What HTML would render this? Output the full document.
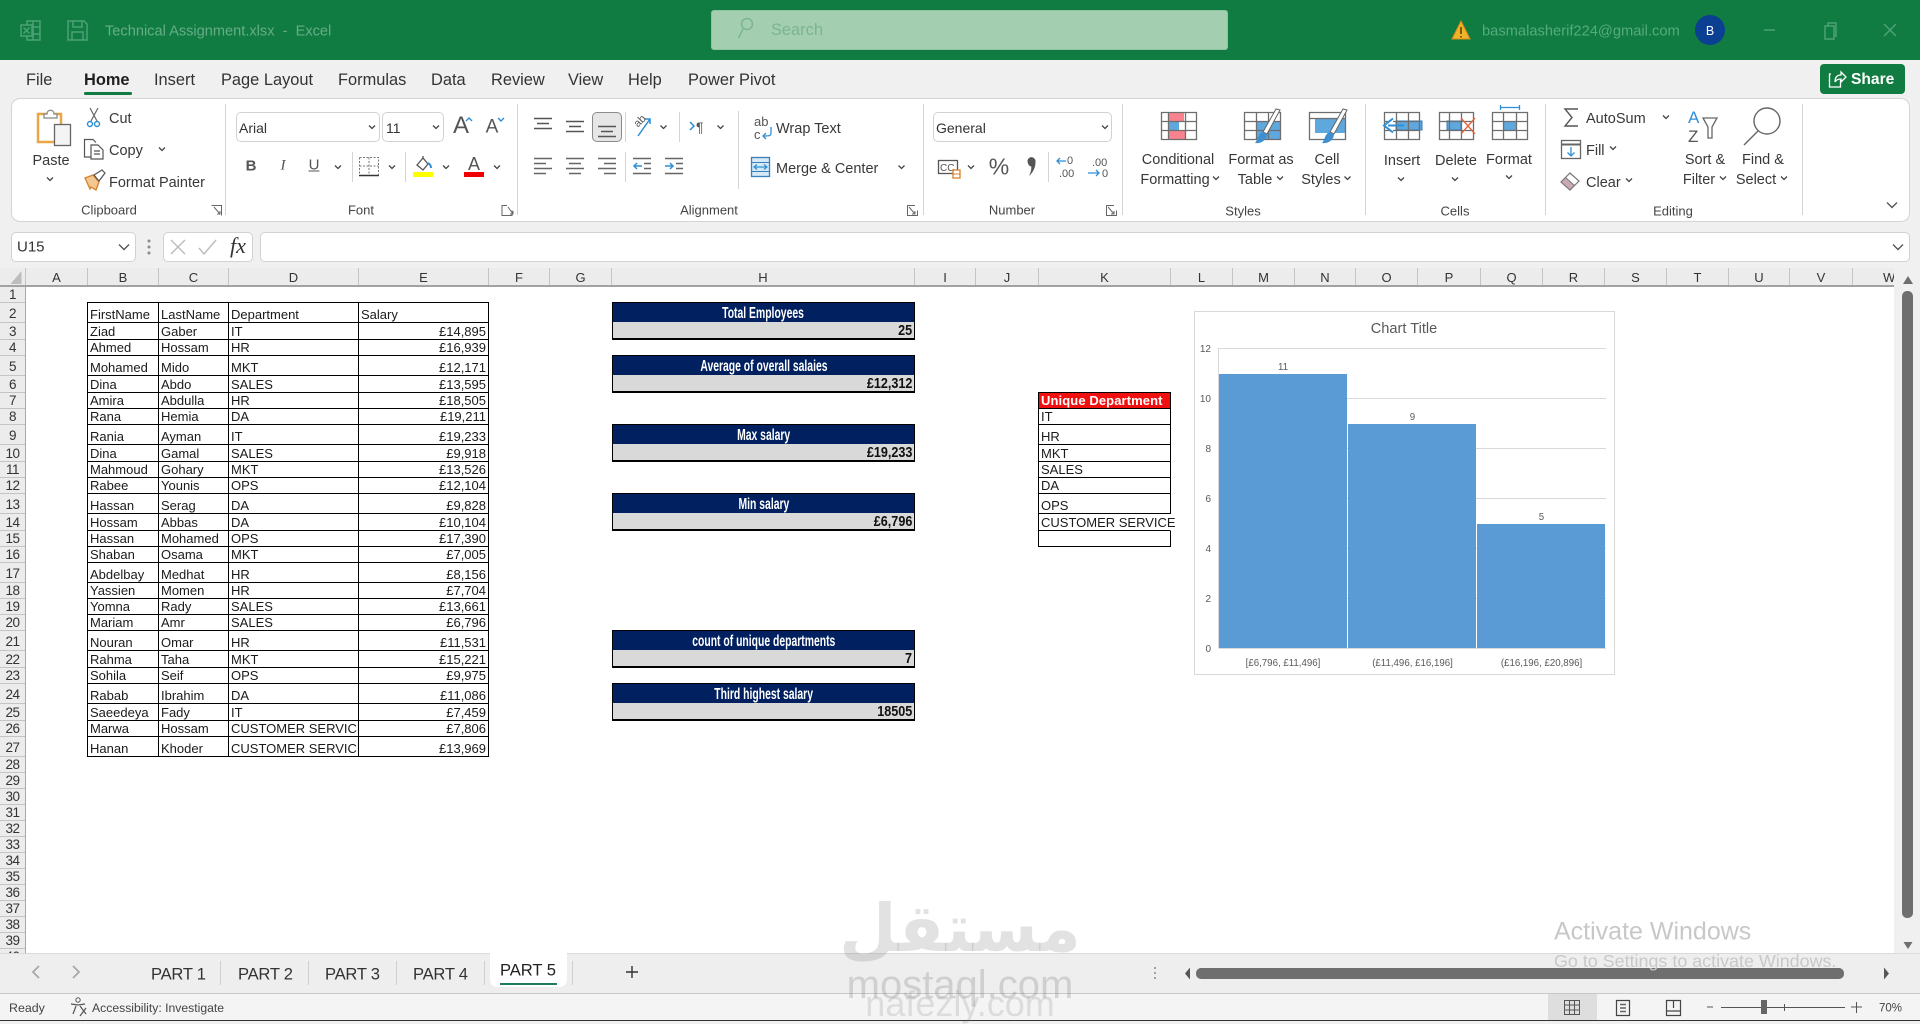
<!DOCTYPE html>
<html lang="en"><head><meta charset="utf-8"><title>Technical Assignment.xlsx - Excel</title>
<style>
html,body{margin:0;padding:0;width:1920px;height:1021px;overflow:hidden;background:#f0f0f0;font-family:"Liberation Sans",sans-serif;color:#333}
div,span,table{box-sizing:border-box}
.a{position:absolute}
.t{position:absolute;white-space:nowrap;line-height:1;transform:translateY(calc(-50% + 1px))}
.c{position:absolute;white-space:nowrap;line-height:1;transform:translate(-50%,calc(-50% + 1px));text-align:center}
.r{font-size:14.5px;color:#383838}
.g{font-size:13px;color:#444}
.tab{font-size:16.4px;color:#333;top:79px}
.box{position:absolute;background:#fff;border:1px solid #d2d2d2;border-radius:5px}
.ch{position:absolute;top:268px;height:18px;border-right:1px solid #c4c4c4;font-size:13px;line-height:20px;text-align:center;color:#333;background:#ececec}
.rh div{height:16px;line-height:16px;border-bottom:1px solid #c4c4c4;text-align:center;font-size:13.5px;letter-spacing:-.5px;color:#333;overflow:hidden}
.rh div.x{height:20px;line-height:22px}
.rh div.y{height:17px;line-height:17px}
table{border-collapse:separate;border-spacing:0;table-layout:fixed;position:absolute;border-top:1px solid #000;border-left:1px solid #000;font-size:13px;color:#1a1a1a}
td{border-right:1px solid #000;border-bottom:1px solid #000;padding:0 2px;white-space:nowrap;overflow:hidden;vertical-align:bottom;line-height:15px;box-sizing:border-box}
.h20 td{height:20px}.h17 td{height:17px}.h16 td{height:16px}
.n{text-align:right}
.kh{position:absolute;left:612px;width:303px;height:21px;background:#002060;border:1px solid #000;color:#fff;text-align:center;font-weight:700;font-size:15.5px;line-height:21px;overflow:hidden}
.kh span{display:inline-block;transform:scaleX(.67);white-space:nowrap}
.kv{position:absolute;left:612px;width:303px;height:18px;background:#d9d9d9;border-left:1px solid #000;border-right:1px solid #000;border-bottom:2px solid #000;text-align:right;font-weight:700;font-size:14.5px;line-height:18px;padding-right:2px;color:#111}
.kv span{display:inline-block;transform:scaleX(.87);transform-origin:right center}
.pt{position:absolute;top:975px;font-size:16.6px;line-height:1;transform:translateY(-50%);color:#333;white-space:nowrap;letter-spacing:-.25px}
svg{position:absolute;left:0;top:0;overflow:visible}
</style></head><body>

<!-- title bar -->
<div class="a" style="left:0;top:0;width:1920px;height:60px;background:#107c41"></div>
<div class="a" style="left:711px;top:10px;width:517px;height:40px;background:#a3cfb0;border-radius:3px;border:1px solid #8fc4a2"></div>
<div class="t" style="left:105px;top:31px;font-size:14.6px;color:#66ad87">Technical Assignment.xlsx&nbsp; -&nbsp; Excel</div>
<div class="t" style="left:771px;top:29px;font-size:16.4px;color:#7ab492">Search</div>
<div class="t" style="left:1482px;top:31px;font-size:14.7px;color:#55ab7e">basmalasherif224@gmail.com</div>
<div class="a" style="left:1695px;top:15px;width:30px;height:30px;border-radius:50%;background:#0b3f92"></div>
<div class="c" style="left:1710px;top:30px;font-size:12.5px;color:#fff">B</div>

<!-- ribbon tabs -->
<div class="t tab" style="left:26px">File</div>
<div class="t tab" style="left:84px;font-weight:700;color:#1f1f1f">Home</div>
<div class="t tab" style="left:154px">Insert</div>
<div class="t tab" style="left:221px">Page Layout</div>
<div class="t tab" style="left:338px">Formulas</div>
<div class="t tab" style="left:431px">Data</div>
<div class="t tab" style="left:491px">Review</div>
<div class="t tab" style="left:568px">View</div>
<div class="t tab" style="left:628px">Help</div>
<div class="t tab" style="left:688px">Power Pivot</div>
<div class="a" style="left:84px;top:92px;width:48px;height:3px;background:#107c41;border-radius:2px"></div>
<div class="a" style="left:1820px;top:64px;width:85px;height:30px;background:#107c41;border-radius:4px"></div>
<div class="t" style="left:1851px;top:79px;font-size:15.6px;font-weight:700;color:#fff">Share</div>

<!-- ribbon -->
<div class="a" style="left:11px;top:98px;width:1899px;height:124px;background:#fff;border:1px solid #d4d4d4;border-radius:9px"></div>
<div class="box" style="left:236px;top:112px;width:144px;height:30px"></div>
<div class="box" style="left:382px;top:112px;width:62px;height:30px"></div>
<div class="a" style="left:592px;top:112px;width:30px;height:30px;background:#e6e6e6;border:1px solid #8a8a8a;border-radius:5px"></div>
<div class="box" style="left:933px;top:112px;width:179px;height:30px"></div>

<div class="c r" style="left:51px;top:160px">Paste</div>
<div class="t r" style="left:109px;top:118px">Cut</div>
<div class="t r" style="left:109px;top:150px">Copy</div>
<div class="t r" style="left:109px;top:182px">Format Painter</div>
<div class="c g" style="left:109px;top:209px">Clipboard</div>
<div class="t" style="left:239px;top:127px;font-size:14px;color:#333">Arial</div>
<div class="t" style="left:386px;top:127px;font-size:14px;color:#333">11</div>
<div class="c" style="left:461px;top:125px;font-size:24px;color:#555">A</div>
<div class="c" style="left:492px;top:126px;font-size:19px;color:#555">A</div>
<div class="c" style="left:251px;top:165px;font-size:15px;font-weight:700;color:#555">B</div>
<div class="c" style="left:283px;top:165px;font-size:15px;font-style:italic;color:#555;font-family:'Liberation Serif',serif">I</div>
<div class="c" style="left:314px;top:164px;font-size:15px;color:#555;text-decoration:underline">U</div>
<div class="c" style="left:474px;top:163px;font-size:18px;color:#555">A</div>
<div class="c g" style="left:361px;top:209px">Font</div>
<div class="t r" style="left:776px;top:128px">Wrap Text</div>
<div class="t r" style="left:776px;top:168px">Merge &amp; Center</div>
<div class="c g" style="left:709px;top:209px">Alignment</div>
<div class="t" style="left:936px;top:127px;font-size:14px;color:#333">General</div>
<div class="c" style="left:999px;top:166px;font-size:23px;color:#555">%</div>
<div class="c g" style="left:1012px;top:209px">Number</div>
<div class="c r" style="left:1178px;top:159px">Conditional</div>
<div class="c r" style="left:1175px;top:179px">Formatting</div>
<div class="c r" style="left:1261px;top:159px">Format as</div>
<div class="c r" style="left:1255px;top:179px">Table</div>
<div class="c r" style="left:1327px;top:159px">Cell</div>
<div class="c r" style="left:1321px;top:179px">Styles</div>
<div class="c g" style="left:1243px;top:210px">Styles</div>
<div class="c r" style="left:1402px;top:160px">Insert</div>
<div class="c r" style="left:1456px;top:160px">Delete</div>
<div class="c r" style="left:1509px;top:159px">Format</div>
<div class="c g" style="left:1455px;top:210px">Cells</div>
<div class="t r" style="left:1586px;top:118px">AutoSum</div>
<div class="t r" style="left:1586px;top:150px">Fill</div>
<div class="t r" style="left:1586px;top:182px">Clear</div>
<div class="c r" style="left:1705px;top:159px">Sort &amp;</div>
<div class="c r" style="left:1699px;top:179px">Filter</div>
<div class="c r" style="left:1763px;top:159px">Find &amp;</div>
<div class="c r" style="left:1756px;top:179px">Select</div>
<div class="c g" style="left:1673px;top:210px">Editing</div>

<!-- formula bar -->
<div class="box" style="left:11px;top:232px;width:125px;height:30px"></div>
<div class="box" style="left:163px;top:232px;width:90px;height:30px"></div>
<div class="box" style="left:260px;top:232px;width:1650px;height:30px"></div>
<div class="t" style="left:17px;top:246px;font-size:15px;color:#333">U15</div>
<div class="c" style="left:238px;top:245px;font-size:22px;font-style:italic;color:#333;font-family:'Liberation Serif',serif">fx</div>

<!-- sheet -->
<div class="a" style="left:26px;top:286px;width:1868px;height:668px;background:#fff"></div>
<div class="a" style="left:0;top:268px;width:26px;height:18px;background:#ececec;border-right:1px solid #c4c4c4"></div>
<div class="ch" style="left:26px;width:62px">A</div>
<div class="ch" style="left:88px;width:71px">B</div>
<div class="ch" style="left:159px;width:70px">C</div>
<div class="ch" style="left:229px;width:130px">D</div>
<div class="ch" style="left:359px;width:130px">E</div>
<div class="ch" style="left:489px;width:61px">F</div>
<div class="ch" style="left:550px;width:62px">G</div>
<div class="ch" style="left:612px;width:303px">H</div>
<div class="ch" style="left:915px;width:61px">I</div>
<div class="ch" style="left:976px;width:63px">J</div>
<div class="ch" style="left:1039px;width:132px">K</div>
<div class="ch" style="left:1171px;width:62px">L</div>
<div class="ch" style="left:1233px;width:62px">M</div>
<div class="ch" style="left:1295px;width:61px">N</div>
<div class="ch" style="left:1356px;width:62px">O</div>
<div class="ch" style="left:1418px;width:63px">P</div>
<div class="ch" style="left:1481px;width:62px">Q</div>
<div class="ch" style="left:1543px;width:62px">R</div>
<div class="ch" style="left:1605px;width:62px">S</div>
<div class="ch" style="left:1667px;width:62px">T</div>
<div class="ch" style="left:1729px;width:61px">U</div>
<div class="ch" style="left:1790px;width:63px">V</div>
<div class="ch" style="left:1853px;width:41px;border-right:0;padding-left:30px;text-align:left">W</div>
<div class="a" style="left:0;top:285px;width:1894px;height:2px;background:#a2a2a2"></div>

<div class="a rh" style="left:0;top:287px;width:26px;height:666px;background:#ececec;border-right:1px solid #a8a8a8;overflow:hidden">
<div style="height:16px">1</div><div class="x">2</div><div class="y">3</div><div>4</div><div class="x">5</div><div class="y">6</div><div>7</div><div>8</div><div class="x">9</div><div class="y">10</div><div>11</div><div>12</div><div class="x">13</div><div class="y">14</div><div>15</div><div>16</div><div class="x">17</div><div>18</div><div>19</div><div>20</div><div class="x">21</div><div class="y">22</div><div>23</div><div class="x">24</div><div class="y">25</div><div>26</div><div class="x">27</div><div>28</div><div>29</div><div>30</div><div>31</div><div>32</div><div>33</div><div>34</div><div>35</div><div>36</div><div>37</div><div>38</div><div>39</div><div>40</div>
</div>

<table style="left:87px;top:302px;width:402px">
<colgroup><col style="width:71px"><col style="width:70px"><col style="width:130px"><col style="width:130px"></colgroup>
<tr class="h20"><td>FirstName</td><td>LastName</td><td>Department</td><td>Salary</td></tr>
<tr class="h17"><td>Ziad</td><td>Gaber</td><td>IT</td><td class="n">£14,895</td></tr>
<tr class="h16"><td>Ahmed</td><td>Hossam</td><td>HR</td><td class="n">£16,939</td></tr>
<tr class="h20"><td>Mohamed</td><td>Mido</td><td>MKT</td><td class="n">£12,171</td></tr>
<tr class="h17"><td>Dina</td><td>Abdo</td><td>SALES</td><td class="n">£13,595</td></tr>
<tr class="h16"><td>Amira</td><td>Abdulla</td><td>HR</td><td class="n">£18,505</td></tr>
<tr class="h16"><td>Rana</td><td>Hemia</td><td>DA</td><td class="n">£19,211</td></tr>
<tr class="h20"><td>Rania</td><td>Ayman</td><td>IT</td><td class="n">£19,233</td></tr>
<tr class="h17"><td>Dina</td><td>Gamal</td><td>SALES</td><td class="n">£9,918</td></tr>
<tr class="h16"><td>Mahmoud</td><td>Gohary</td><td>MKT</td><td class="n">£13,526</td></tr>
<tr class="h16"><td>Rabee</td><td>Younis</td><td>OPS</td><td class="n">£12,104</td></tr>
<tr class="h20"><td>Hassan</td><td>Serag</td><td>DA</td><td class="n">£9,828</td></tr>
<tr class="h17"><td>Hossam</td><td>Abbas</td><td>DA</td><td class="n">£10,104</td></tr>
<tr class="h16"><td>Hassan</td><td>Mohamed</td><td>OPS</td><td class="n">£17,390</td></tr>
<tr class="h16"><td>Shaban</td><td>Osama</td><td>MKT</td><td class="n">£7,005</td></tr>
<tr class="h20"><td>Abdelbay</td><td>Medhat</td><td>HR</td><td class="n">£8,156</td></tr>
<tr class="h16"><td>Yassien</td><td>Momen</td><td>HR</td><td class="n">£7,704</td></tr>
<tr class="h16"><td>Yomna</td><td>Rady</td><td>SALES</td><td class="n">£13,661</td></tr>
<tr class="h16"><td>Mariam</td><td>Amr</td><td>SALES</td><td class="n">£6,796</td></tr>
<tr class="h20"><td>Nouran</td><td>Omar</td><td>HR</td><td class="n">£11,531</td></tr>
<tr class="h17"><td>Rahma</td><td>Taha</td><td>MKT</td><td class="n">£15,221</td></tr>
<tr class="h16"><td>Sohila</td><td>Seif</td><td>OPS</td><td class="n">£9,975</td></tr>
<tr class="h20"><td>Rabab</td><td>Ibrahim</td><td>DA</td><td class="n">£11,086</td></tr>
<tr class="h17"><td>Saeedeya</td><td>Fady</td><td>IT</td><td class="n">£7,459</td></tr>
<tr class="h16"><td>Marwa</td><td>Hossam</td><td>CUSTOMER SERVICE</td><td class="n">£7,806</td></tr>
<tr class="h20"><td>Hanan</td><td>Khoder</td><td>CUSTOMER SERVICE</td><td class="n">£13,969</td></tr>
</table>

<div class="kh" style="top:302px"><span>Total Employees</span></div><div class="kv" style="top:322px"><span>25</span></div>
<div class="kh" style="top:355px"><span>Average of overall salaies</span></div><div class="kv" style="top:375px"><span>£12,312</span></div>
<div class="kh" style="top:424px"><span>Max salary</span></div><div class="kv" style="top:444px"><span>£19,233</span></div>
<div class="kh" style="top:493px"><span>Min salary</span></div><div class="kv" style="top:513px"><span>£6,796</span></div>
<div class="kh" style="top:630px"><span>count of unique departments</span></div><div class="kv" style="top:650px"><span>7</span></div>
<div class="kh" style="top:683px"><span>Third highest salary</span></div><div class="kv" style="top:703px"><span>18505</span></div>

<table style="left:1038px;top:392px;width:133px">
<tr class="h16"><td style="background:#f01010;color:#fff;font-weight:700;font-size:13px;letter-spacing:.1px">Unique Department</td></tr>
<tr class="h16"><td>IT</td></tr>
<tr class="h20"><td>HR</td></tr>
<tr class="h17"><td>MKT</td></tr>
<tr class="h16"><td>SALES</td></tr>
<tr class="h16"><td>DA</td></tr>
<tr class="h20"><td>OPS</td></tr>
<tr class="h17"><td style="overflow:visible;border-right-color:transparent">CUSTOMER SERVICE</td></tr>
<tr class="h16"><td>&nbsp;</td></tr>
</table>

<!-- chart -->
<svg width="1920" height="1021" viewBox="0 0 1920 1021" font-family="Liberation Sans, sans-serif">
<rect x="1194.5" y="311.5" width="420" height="363" fill="#fff" stroke="#d9d9d9"/>
<text x="1404" y="333" font-size="14.6" fill="#595959" text-anchor="middle">Chart Title</text>
<path d="M1219 348.5H1606M1219 398.5H1606M1219 448.5H1606M1219 498.5H1606M1219 548.5H1606M1219 598.5H1606M1219 648.5H1606M1218.5 348V648" stroke="#d9d9d9" fill="none"/>
<rect x="1219" y="374" width="128" height="274" fill="#5b9bd5"/>
<rect x="1348" y="424" width="128" height="224" fill="#5b9bd5"/>
<rect x="1477" y="524" width="128" height="124" fill="#5b9bd5"/>
<g font-size="10" fill="#595959" text-anchor="end">
<text x="1211" y="352">12</text><text x="1211" y="402">10</text><text x="1211" y="452">8</text><text x="1211" y="502">6</text><text x="1211" y="552">4</text><text x="1211" y="602">2</text><text x="1211" y="652">0</text>
</g>
<g font-size="9.7" fill="#595959" text-anchor="middle">
<text x="1283" y="370">11</text><text x="1412.5" y="420">9</text><text x="1541.5" y="520">5</text>
<text x="1283" y="666">[£6,796, £11,496]</text><text x="1412.5" y="666">(£11,496, £16,196]</text><text x="1541.5" y="666">(£16,196, £20,896]</text>
</g>
</svg>

<!-- scrollbars / tabs / status -->
<div class="a" style="left:1894px;top:262px;width:26px;height:691px;background:#f0f0f0"></div>
<div class="a" style="left:1902px;top:291px;width:11px;height:627px;background:#6e6e6e;border-radius:5px"></div>
<div class="a" style="left:0;top:953px;width:1920px;height:40px;background:#eeeeee;border-top:1px solid #dadada"></div>
<div class="a" style="left:0;top:993px;width:1920px;height:27px;background:#f4f4f4;border-top:1px solid #c8c8c8"></div>
<div class="a" style="left:0;top:1020px;width:1920px;height:1px;background:#333"></div>
<div class="a" style="left:490px;top:953px;width:77px;height:34px;background:#fff;border-radius:0 0 7px 7px"></div>
<div class="a" style="left:500px;top:983px;width:57px;height:2px;background:#1f7a5c"></div>
<div class="pt" style="left:151px">PART 1</div>
<div class="pt" style="left:238px">PART 2</div>
<div class="pt" style="left:325px">PART 3</div>
<div class="pt" style="left:413px">PART 4</div>
<div class="pt" style="left:500px;top:971px;color:#222;letter-spacing:-.05px">PART 5</div>
<div class="a" style="left:220px;top:961px;width:1px;height:24px;background:#cfcfcf"></div>
<div class="a" style="left:308px;top:961px;width:1px;height:24px;background:#cfcfcf"></div>
<div class="a" style="left:396px;top:961px;width:1px;height:24px;background:#cfcfcf"></div>
<div class="a" style="left:484px;top:961px;width:1px;height:24px;background:#cfcfcf"></div>
<div class="a" style="left:572px;top:961px;width:1px;height:24px;background:#cfcfcf"></div>
<div class="a" style="left:1196px;top:968px;width:648px;height:11px;background:#6e6e6e;border-radius:5px"></div>
<div class="t" style="left:9px;top:1007px;font-size:12.4px;color:#444">Ready</div>
<div class="t" style="left:92px;top:1007px;font-size:12.2px;color:#444">Accessibility: Investigate</div>
<div class="a" style="left:1548px;top:994px;width:49px;height:26px;background:#dedede"></div>
<div class="t" style="left:1879px;top:1008px;font-size:11.5px;color:#444">70%</div>

<!-- icons -->
<svg width="1920" height="1021" viewBox="0 0 1920 1021" fill="none" font-family="Liberation Sans, sans-serif">
<!-- titlebar icons -->
<g stroke="#4ca277" stroke-width="1.5">
<path d="M27 21h13v19H27zM27 27h13M27 34h13M33 21v19"/><rect x="21" y="25" width="11" height="11" fill="#107c41"/><path d="M23.5 27.5l6 6m0-6l-6 6"/>
<path d="M68 21h16l3 3v16H68zM73 21v6h9v-6M72 40v-8h11v8"/>
<path d="M1764 30h11"/><path d="M1825 26h9v13h-9zM1828 26v-3h8v13h-2"/><path d="M1884 24l12 12m0-12l-12 12"/>
</g>
<path d="M1461 21l9 18h-18z" fill="#f0b429" stroke="#d98a1c"/><path d="M1461 27v7M1461 36v1.5" stroke="#5a3a00" stroke-width="1.5"/>
<circle cx="747" cy="24" r="5.5" stroke="#7ab492" stroke-width="1.5"/><path d="M743 29l-4.500 9" stroke="#7ab492" stroke-width="1.5"/>
<!-- share icon -->
<path d="M1831 75h-1.500v13h11v-7M1835 83c0-5 2-7 6-7v-3l5 5-5 5v-3c-3 0-5 1-6 3z" stroke="#fff" stroke-width="1.300" transform="translate(0 -1)"/>
<!-- separators -->
<path d="M225.500 104v111M517.500 104v111M923.500 104v111M1122.500 104v111M1365.500 104v111M1545.500 104v111M1802.500 104v111" stroke="#d4d4d4"/>
<path d="M352.500 152v30M405.500 152v30M625.500 112v30M625.500 152v30M679.500 112v30M738.500 111v78M1048.500 152v30" stroke="#d4d4d4"/>
<!-- launchers -->
<path d="M211.500 205.500h10v10M507 205.500h-5v10h10v-5M915 205.500h-7.500v10h10v-5M1114 205.500h-7.500v10h10v-5M214 207l6 7m0-3v3h-3M508 207l5 7m0-3v3h-3M909 207l6 7m0-3v3h-3M1108 207l6 7m0-3v3h-3" stroke="#666" stroke-width="1"/>
<!-- chevrons -->
<path stroke="#444" stroke-width="1.300" d="M47 177.500l3 3 3-3M159 147.500l3 3 3-3M369 125.500l3 3 3-3M433 125.500l3 3 3-3M335 165.500l3 3 3-3M389 165.500l3 3 3-3M443 165.500l3 3 3-3M494 165.500l3 3 3-3M660.500 125.500l3 3 3-3M717.500 125.500l3 3 3-3M898.500 165.500l3 3 3-3M1102 125.500l3 3 3-3M968 165.500l3 3 3-3M1213 176.500l3 3 3-3M1277 176.500l3 3 3-3M1344.500 176.500l3 3 3-3M1398 177.500l3 3 3-3M1452 177.500l3 3 3-3M1506 175.500l3 3 3-3M1663 115.500l3 3 3-3M1610 146.500l3 3 3-3M1626 178.500l3 3 3-3M1720 176.500l3 3 3-3M1781 176.500l3 3 3-3"/>
<path stroke="#555" stroke-width="1.400" d="M119 244.500l5 5 5-5M1893 244.500l5 5 5-5M1887 202.500l5 5 5-5"/>
<!-- paste -->
<rect x="38" y="114" width="23" height="28" stroke="#eaa747" stroke-width="2.500" fill="#fff"/><path d="M44 118v-4h3c0-5 7-5 7 0h3v4z" fill="#fff" stroke="#888" stroke-width="1.300"/><rect x="54.500" y="124.500" width="16" height="21" fill="#f4f4f4" stroke="#666" stroke-width="1.300"/>
<!-- cut -->
<path d="M90 108l7 13M98 108l-7 13" stroke="#666" stroke-width="1.200"/><circle cx="90" cy="124" r="2.500" stroke="#2f8fd6" stroke-width="1.400"/><circle cx="97" cy="124" r="2.500" stroke="#2f8fd6" stroke-width="1.400"/>
<!-- copy -->
<path d="M91 157h-6.500v-17.500H93l3 3" stroke="#555" stroke-width="1.200"/><path d="M91 145h7l5 5v9H91zM94 151h6M94 154h6" fill="#fff" stroke="#555" stroke-width="1.200"/>
<!-- painter -->
<path d="M85 178l8-3 6 7-3 8-5-3-1 2z" fill="#f3c78f" stroke="#d6812a" stroke-width="1.300"/><path d="M94 175l8-5 3 3-6 8z" stroke="#555" stroke-width="1.200" fill="#fff"/>
<!-- grow/shrink carets -->
<path d="M466 121l3-3 3 3" stroke="#2f8fd6" stroke-width="1.400"/><path d="M498 118l3 3 3-3" stroke="#2f8fd6" stroke-width="1.400"/>
<!-- borders -->
<path d="M359.500 157.500h19v17M359.500 157.500v17M369 157.500v17M359.500 166h19" stroke="#777" stroke-dasharray="2 1.500"/><path d="M359 175.500h20" stroke="#333" stroke-width="1.500"/>
<!-- fill color -->
<path d="M417 165l6-7 5 6-5 6zM423 156v3" stroke="#555" stroke-width="1.300"/><path d="M428 163c2 1 3 3 3 5" stroke="#2f8fd6" stroke-width="2"/><rect x="413" y="172" width="20" height="5" fill="#ffff00"/>
<rect x="464" y="172" width="20" height="5" fill="#ee0000"/>
<!-- alignment -->
<path stroke="#555" stroke-width="1.500" d="M534 118.500h18M537 123.500h12M534 128.500h18M566 121.500h18M569 126.500h12M566 131.500h18M598 126.500h18M601 131.500h12M598 136.500h18"/>
<path stroke="#666" stroke-width="1.500" d="M534 158.500h18M534 163.500h12M534 168.500h18M534 173.500h12M566 158.500h18M569 163.500h12M566 168.500h18M569 173.500h12M598 158.500h18M604 163.500h12M598 168.500h18M604 173.500h12M633 158.500h18M644 163.500h7M644 168.500h7M633 173.500h18M665 158.500h18M676 163.500h7M676 168.500h7M665 173.500h18"/>
<path stroke="#2f8fd6" stroke-width="1.500" d="M642 166h-8m3-3l-3 3 3 3M665 166h8m-3-3l3 3-3 3M638 136l12-17m-5 0h5v5"/>
<path stroke="#2f8fd6" stroke-width="1.500" d="M690 122l4 4-4 4"/>
<text x="696" y="132" font-size="14" fill="#555">¶</text>
<text x="633" y="124" font-size="11" fill="#555" transform="rotate(-45 640 120)">ab</text>
<!-- wrap -->
<text x="754" y="126" font-size="13" fill="#555">ab</text><text x="754" y="139" font-size="13" fill="#555">c</text>
<path d="M771 127v6c0 3-2 3-8 3m3-3l-3 3 3 3" stroke="#2f8fd6" stroke-width="1.300"/>
<!-- merge -->
<rect x="751.500" y="157.500" width="18" height="19" stroke="#3a7fb8" stroke-width="1.300" fill="#d6e9f7"/><path d="M751 162.500h19M751 171.500h19" stroke="#3a7fb8"/><path d="M754 167h13m-10-2.500l-3 2.500 3 2.500m7-5l3 2.500-3 2.500" stroke="#2f8fd6" stroke-width="1.200"/>
<!-- number -->
<rect x="938.500" y="160.500" width="19" height="13" stroke="#555" stroke-width="1.300"/><text x="940" y="171" font-size="10" fill="#555">CC</text><path d="M953 170h7v8h-7z" fill="#fff" stroke="#d6812a" stroke-width="1.300"/><path d="M953 174h7" stroke="#d6812a"/>
<path d="M1027.500 160.500a4 4 0 1 1 8 1.500c0 5-2 10-6.500 14 1.700-3.500 2.500-6.500 2.300-9.500-2 0-3.800-2.500-3.800-6z" fill="#555"/>
<text x="1067" y="164" font-size="11" fill="#555">0</text><text x="1059" y="177" font-size="11" fill="#555">.00</text><path d="M1066 161h-9m3-3l-3 3 3 3" stroke="#2f8fd6" stroke-width="1.300"/>
<text x="1092" y="166" font-size="11" fill="#555">.00</text><text x="1102" y="177" font-size="11" fill="#555">0</text><path d="M1088 173h11m-3-3l3 3-3 3" stroke="#2f8fd6" stroke-width="1.300"/>
<!-- cond formatting -->
<rect x="1168" y="113" width="16" height="8" fill="#f8838e"/><rect x="1168" y="122" width="11" height="8" fill="#5ea8de"/><rect x="1168" y="130" width="18" height="9" fill="#f8838e"/>
<path d="M1161.500 112.500h35v27h-35zM1168.500 112v27M1185.500 112v27M1161 121.500h35M1161 130.500h35" stroke="#6e6e6e" stroke-width="1.300"/>
<!-- format table -->
<rect x="1256" y="121" width="24" height="18" fill="#5ea8de"/><path d="M1244.500 112.500h36v27h-36zM1256.500 112v27M1268.500 112v27M1244 121.500h36M1244 130.500h36" stroke="#6e6e6e" stroke-width="1.300"/>
<path d="M1280 110l-13 24-4-2 13-23z" fill="#fff" stroke="#666"/><path d="M1263 132l4 2c0 6-6 10-12 9 3-3 3-10 8-11z" fill="#3f8fd0"/>
<!-- cell styles -->
<rect x="1315" y="118" width="30" height="15" fill="#5ea8de"/><path d="M1309.500 112.500h36v27h-36zM1309 118.500h36" stroke="#6e6e6e" stroke-width="1.300"/>
<path d="M1347 110l-13 24-4-2 13-23z" fill="#fff" stroke="#666"/><path d="M1330 132l4 2c0 6-6 10-12 9 3-3 3-10 8-11z" fill="#3f8fd0"/>
<!-- insert -->
<rect x="1396" y="121" width="26" height="9" fill="#5ea8de" stroke="#2f7dbd"/><path d="M1384.500 112.500h35v27h-35zM1396.500 112v27M1408.500 112v27M1384 121.500h35M1384 130.500h35" stroke="#6e6e6e" stroke-width="1.300"/>
<path d="M1404 125.500h-16m5-7l-9 7 9 7" stroke="#2f8fd6" stroke-width="2" fill="#fff"/>
<!-- delete -->
<rect x="1447" y="121" width="14" height="9" fill="#5ea8de" stroke="#2f7dbd"/><path d="M1439.500 112.500h34v27h-34zM1449.500 112v27M1461.500 112v27M1439 121.500h34M1439 130.500h34" stroke="#6e6e6e" stroke-width="1.300"/>
<path d="M1461 118l14 16m0-16l-14 16" stroke="#e8643c" stroke-width="1.400"/>
<!-- format -->
<rect x="1503" y="121" width="14" height="9" fill="#5ea8de"/><path d="M1492.500 112.500h35v27h-35zM1503.500 112v27M1516.500 112v27M1492 121.500h35M1492 130.500h35" stroke="#6e6e6e" stroke-width="1.300"/>
<path d="M1500 107.500h20M1500.500 105v5M1519.500 105v5" stroke="#2f8fd6" stroke-width="1.300"/>
<!-- editing -->
<path d="M1578 109h-13l7 8.500-7 8.500h13" stroke="#555" stroke-width="1.400"/>
<rect x="1561.500" y="140.500" width="19" height="18" stroke="#666" stroke-width="1.300" fill="#fff"/><path d="M1561 144.500h20" stroke="#666" stroke-width="2"/><path d="M1571 147v9m-3.500-3.500l3.500 3.500 3.500-3.500" stroke="#2f8fd6" stroke-width="1.300"/>
<path d="M1561 182l9-9 9 8-9 9z" fill="#fff" stroke="#777" stroke-width="1.200"/><path d="M1561 182l4.500-4.500 9 8-4.500 4.500z" fill="#c9a9b4" stroke="#777"/>
<text x="1688" y="123" font-size="17" fill="#2f8fd6">A</text><text x="1688" y="142" font-size="17" fill="#555">Z</text>
<path d="M1703 118h14l-5 9v11h-4v-11z" stroke="#666" stroke-width="1.300"/>
<circle cx="1767" cy="121" r="13" stroke="#666" stroke-width="1.400"/><path d="M1758 131l-14 14" stroke="#666" stroke-width="1.400"/>
<!-- formula bar -->
<circle cx="149" cy="241" r="1.500" fill="#8a8a8a"/><circle cx="149" cy="247" r="1.500" fill="#8a8a8a"/><circle cx="149" cy="253" r="1.500" fill="#8a8a8a"/>
<path d="M171 240l14 14m0-14l-14 14" stroke="#bdbdbd" stroke-width="1.500"/><path d="M199 248l5 6 12-14" stroke="#bdbdbd" stroke-width="1.500"/>
<!-- corner + scroll arrows -->
<path d="M21.500 271v13h-11z" fill="#bdbdbd"/>
<path d="M1908 276l5 8h-10z" fill="#6e6e6e"/><path d="M1908 949l-4.500-7h9z" fill="#6e6e6e"/>
<path d="M39 966l-6 6 6 6M73 966l6 6-6 6" stroke="#a8a8a8" stroke-width="1.800"/>
<path d="M632 966v12M626 972h12" stroke="#333" stroke-width="1.400"/>
<circle cx="1155" cy="968" r="1" fill="#888"/><circle cx="1155" cy="973" r="1" fill="#888"/><circle cx="1155" cy="978" r="1" fill="#888"/>
<path d="M1190 967.500l-5 6 5 6zM1884 967.500l5 6-5 6z" fill="#555"/>
<!-- status -->
<circle cx="78" cy="1000" r="2.200" stroke="#555"/><path d="M71 1004l7 1 7-1M76 1006l-3 8M80 1006l6 8m0-6l-6 8" stroke="#555" stroke-width="1.200"/>
<path d="M1564.500 1000.500h15v14h-15zM1564 1005h15M1564 1010h15M1569.500 1000v14M1574.500 1000v14" stroke="#555"/>
<path d="M1616.500 1000.500h13v15h-13z" stroke="#444" stroke-width="1.200"/><path d="M1620 1004.500h6M1620 1008h6M1620 1011.500h6" stroke="#666" stroke-width="1.500"/>
<path d="M1666.500 1000.500h14v15h-14zM1666 1011h15M1673.500 1000v8" stroke="#444" stroke-width="1.200"/>
<path d="M1707 1007h6M1721 1007.500h124M1851 1007h11M1856.500 1002v11M1784.500 1004v7" stroke="#555"/>
<rect x="1761" y="1000" width="6" height="14" fill="#666"/>
</svg>

<!-- overlays -->
<div class="c" style="left:960px;top:928px;font-size:66px;font-weight:700;color:rgba(110,110,110,.2);font-family:'DejaVu Sans',sans-serif">مستقل</div>
<div class="c" style="left:960px;top:984px;font-size:40px;color:rgba(110,110,110,.24)">mostaql.com</div>
<div class="c" style="left:960px;top:1003px;font-size:36px;color:rgba(110,110,110,.18)">nafezly.com</div>
<div class="t" style="left:1554px;top:931px;font-size:25px;color:#c8c8c8">Activate Windows</div>
<div class="t" style="left:1554px;top:961px;font-size:17.9px;color:#c8c8c8">Go to Settings to activate Windows.</div>
</body></html>
